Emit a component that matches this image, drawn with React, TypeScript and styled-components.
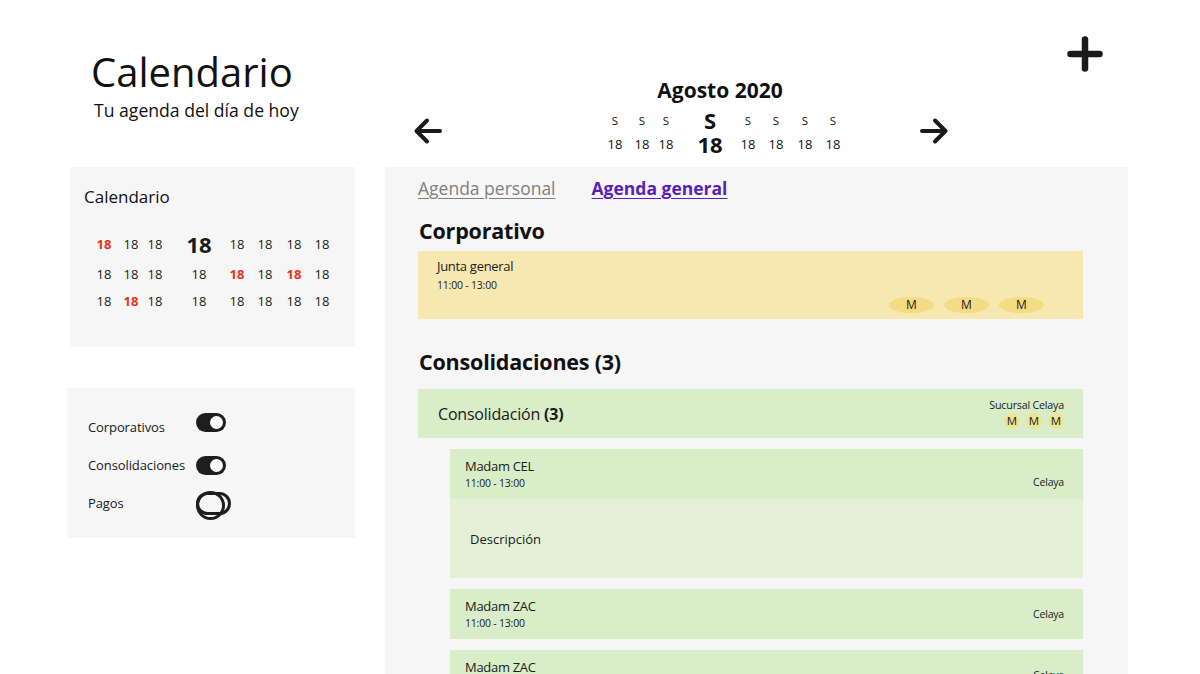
import React from "react";
import styled, { createGlobalStyle } from "styled-components";

const Global = createGlobalStyle`
  html, body { margin: 0; padding: 0; background: #ffffff; overflow: hidden; }
  body { font-family: "Open Sans", "Noto Sans", Arial, sans-serif; color: #1a1a1a; }
  * { box-sizing: border-box; }
`;

const Page = styled.div`
  width: 1200px;
  height: 674px;
  display: flex;
  flex-direction: column;
  overflow: hidden;
`;

const Header = styled.header`
  display: flex;
  height: 167px;
  flex-shrink: 0;
`;

const TitleBlock = styled.div`
  width: 413px;
  padding: 48px 0 0 91px;
`;

const Title = styled.h1`
  margin: 0;
  font-size: 40px;
  line-height: 48px;
  font-weight: 400;
  color: #111;
`;

const Subtitle = styled.p`
  margin: 2px 0 0 3px;
  font-size: 17.6px;
  line-height: 24px;
  color: #111;
`;

const Nav = styled.nav`
  display: flex;
  align-items: flex-end;
  padding-top: 78px;
  height: 156px;
`;

const ArrowButton = styled.button<{ $ml?: number }>`
  border: 0;
  background: none;
  padding: 0;
  width: 30px;
  height: 28px;
  margin-bottom: 11px;
  margin-left: ${(p) => p.$ml ?? 0}px;
  cursor: pointer;
  display: flex;
  align-items: center;
  justify-content: center;
`;

const WeekBlock = styled.div`
  width: 254px;
  margin-left: 154px;
  display: flex;
  flex-direction: column;
  align-items: center;
`;

const Month = styled.div`
  font-size: 21px;
  line-height: 24px;
  font-weight: 700;
  color: #111;
  margin-left: -8px;
`;

const dayColumns = "36px 18px 30px 58px 18px 38px 20px 36px";

const DayGrid = styled.div`
  margin-top: 6px;
  display: grid;
  grid-template-columns: ${dayColumns};
  grid-auto-rows: 24px;
  width: 100%;
`;

const DayCell = styled.span<{ $big?: boolean; $letter?: boolean }>`
  display: flex;
  align-items: center;
  justify-content: center;
  font-size: ${(p) => (p.$big ? "22px" : p.$letter ? "11.5px" : "13px")};
  font-weight: ${(p) => (p.$big ? 700 : 400)};
  color: #111;
`;

const PlusButton = styled.button`
  margin: 36px 97px 0 auto;
  width: 36px;
  height: 36px;
  border: 0;
  padding: 0;
  background: none;
  cursor: pointer;
`;

const Body = styled.div`
  display: flex;
  padding-left: 67px;
  flex: 1;
  min-height: 0;
`;

const Sidebar = styled.aside`
  width: 288px;
  display: flex;
  flex-direction: column;
  gap: 41px;
`;

const CalendarCard = styled.section`
  margin-left: 3px;
  height: 180px;
  background: #f6f6f6;
  padding: 18px 0 0 14px;
`;

const CardLabel = styled.h3`
  margin: 0;
  font-size: 17px;
  line-height: 24px;
  font-weight: 400;
  color: #111;
`;

const MiniGrid = styled.div`
  margin: 20px 0 0 2px;
  display: grid;
  grid-template-columns: ${dayColumns};
  grid-template-rows: 30px 30px 24px;
`;

const MiniDay = styled.span<{ $big?: boolean; $red?: boolean }>`
  display: flex;
  align-items: center;
  justify-content: center;
  font-size: ${(p) => (p.$big ? "22px" : "13px")};
  font-weight: ${(p) => (p.$big ? 700 : p.$red ? 700 : 400)};
  color: ${(p) => (p.$red ? "#e8331c" : "#1a1a1a")};
`;

const FilterCard = styled.section`
  height: 150px;
  background: #f6f6f6;
  padding: 27px 0 0 21px;
  display: flex;
  flex-direction: column;
  gap: 14px;
`;

const FilterRow = styled.label`
  display: flex;
  align-items: center;
  height: 24px;
`;

const FilterName = styled.span`
  width: 108px;
  font-size: 13px;
  color: #1a1a1a;
  letter-spacing: -0.1px;
`;

const Switch = styled.span<{ $on?: boolean; $raised?: boolean }>`
  position: relative;
  display: inline-block;
  width: ${(p) => (p.$on ? "30px" : "35px")};
  height: ${(p) => (p.$on ? "19px" : "23px")};
  margin-top: ${(p) => (p.$raised ? "-10px" : "0")};
  border-radius: 12px;
  background: ${(p) => (p.$on ? "#1e1e1e" : "transparent")};
  border: ${(p) => (p.$on ? "0" : "3.5px solid #1e1e1e")};
  &::after {
    content: "";
    position: absolute;
    border-radius: 50%;
    ${(p) =>
      p.$on
        ? `top: 3px; right: 3px; width: 13px; height: 13px; background: #fff;`
        : `top: -3.5px; left: -3.5px; width: 23px; height: 23px; border: 3.5px solid #1e1e1e; background: transparent;`}
  }
`;

const Main = styled.main`
  margin-left: 30px;
  width: 743px;
  background: #f6f6f6;
  padding: 10px 45px 0 33px;
  overflow: hidden;
`;

const Tabs = styled.div`
  display: flex;
  gap: 36px;
`;

const Tab = styled.a<{ $active?: boolean }>`
  font-size: 17.5px;
  line-height: 22px;
  font-weight: ${(p) => (p.$active ? 700 : 400)};
  color: ${(p) => (p.$active ? "#5a1fb8" : "#808080")};
  text-decoration: underline;
  text-underline-offset: 3px;
  cursor: pointer;
`;

const SectionTitle = styled.h2<{ $mt: number; $mb: number }>`
  margin: ${(p) => p.$mt}px 0 ${(p) => p.$mb}px 1px;
  font-size: 21.5px;
  line-height: 28px;
  font-weight: 700;
  color: #111;
  letter-spacing: -0.2px;
`;

const EventCard = styled.div`
  height: 68px;
  background: #f7e8b1;
  padding: 6px 39px 6px 19px;
  display: flex;
  flex-direction: column;
`;

const EventName = styled.div`
  font-size: 13px;
  line-height: 18px;
  color: #1a1a1a;
  letter-spacing: -0.3px;
`;

const EventTime = styled.div<{ $gap?: number }>`
  font-size: 10.5px;
  line-height: 16px;
  margin-top: ${(p) => p.$gap ?? 0}px;
  color: #1a1a1a;
  letter-spacing: -0.2px;
`;

const Pills = styled.div`
  margin-top: auto;
  align-self: flex-end;
  display: flex;
  gap: 10px;
`;

const Pill = styled.span`
  width: 45px;
  height: 16px;
  border-radius: 50%;
  background: #f4dc84;
  font-size: 12px;
  line-height: 16px;
  text-align: center;
  color: #1a1a1a;
`;

const GroupCard = styled.div`
  height: 49px;
  background: #d9edc8;
  padding: 0 19px 0 20px;
  display: flex;
  align-items: center;
  justify-content: space-between;
`;

const GroupName = styled.div`
  font-size: 16px;
  color: #1a1a1a;
  letter-spacing: -0.2px;
  b { font-weight: 700; }
`;

const GroupMeta = styled.div`
  display: flex;
  flex-direction: column;
  align-items: flex-end;
  gap: 1px;
`;

const Branch = styled.span`
  font-size: 10.7px;
  line-height: 14px;
  color: #1a1a1a;
  letter-spacing: -0.2px;
`;

const Avatars = styled.div`
  display: flex;
  gap: 6px;
`;

const Avatar = styled.span`
  width: 16px;
  height: 16px;
  border-radius: 50%;
  background: #eee594;
  font-size: 11.5px;
  line-height: 16px;
  text-align: center;
  color: #1a1a1a;
`;

const SubList = styled.div`
  margin-left: 32px;
  margin-top: 11px;
  display: flex;
  flex-direction: column;
  gap: 11px;
`;

const SubCard = styled.div``;

const SubHeader = styled.div`
  height: 50px;
  background: #d9edc8;
  padding: 8px 19px 0 15px;
  display: flex;
  align-items: flex-start;
  justify-content: space-between;
`;

const SubPlace = styled.span<{ $mid?: boolean }>`
  font-size: 10.5px;
  line-height: 16px;
  color: #1a1a1a;
  margin-top: ${(p) => (p.$mid ? "9px" : "17px")};
  letter-spacing: -0.2px;
`;

const SubBody = styled.div`
  height: 79px;
  background: #e3f0d6;
  padding: 0 20px;
  display: flex;
  align-items: center;
  font-size: 13px;
  color: #1a1a1a;
`;

const ArrowIcon = ({ dir }: { dir: "left" | "right" }) => (
  <svg width="30" height="28" viewBox="0 0 30 28" fill="none" stroke="#1a1a1a" strokeWidth="4" strokeLinecap="round" strokeLinejoin="round">
    {dir === "left" ? (
      <path d="M27 14 H4 M14 3.5 L3.5 14 L14 24.5" />
    ) : (
      <path d="M3 14 H26 M16 3.5 L26.5 14 L16 24.5" />
    )}
  </svg>
);

const PlusIcon = () => (
  <svg width="36" height="36" viewBox="0 0 36 36" fill="none" stroke="#1a1a1a" strokeWidth="6.5" strokeLinecap="round">
    <path d="M18 3.5 V32.5 M3.5 18 H32.5" />
  </svg>
);

const miniRows: { red?: boolean; big?: boolean }[][] = [
  [{ red: true }, {}, {}, { big: true }, {}, {}, {}, {}],
  [{}, {}, {}, {}, { red: true }, {}, { red: true }, {}],
  [{}, { red: true }, {}, {}, {}, {}, {}, {}],
];

const subEvents = [
  { name: "Madam CEL", desc: true },
  { name: "Madam ZAC" },
  { name: "Madam ZAC" },
];

export default function App() {
  return (
    <Page>
      <Global />
      <Header>
        <TitleBlock>
          <Title>Calendario</Title>
          <Subtitle>Tu agenda del día de hoy</Subtitle>
        </TitleBlock>
        <Nav>
          <ArrowButton aria-label="Anterior">
            <ArrowIcon dir="left" />
          </ArrowButton>
          <WeekBlock>
            <Month>Agosto 2020</Month>
            <DayGrid>
              {Array.from({ length: 8 }).map((_, i) => (
                <DayCell key={"l" + i} $big={i === 3} $letter>
                  S
                </DayCell>
              ))}
              {Array.from({ length: 8 }).map((_, i) => (
                <DayCell key={"n" + i} $big={i === 3}>
                  18
                </DayCell>
              ))}
            </DayGrid>
          </WeekBlock>
          <ArrowButton aria-label="Siguiente" $ml={68}>
            <ArrowIcon dir="right" />
          </ArrowButton>
        </Nav>
        <PlusButton aria-label="Agregar">
          <PlusIcon />
        </PlusButton>
      </Header>
      <Body>
        <Sidebar>
          <CalendarCard>
            <CardLabel>Calendario</CardLabel>
            <MiniGrid>
              {miniRows.flatMap((row, r) =>
                row.map((d, c) => (
                  <MiniDay key={r + "-" + c} $red={d.red} $big={d.big}>
                    18
                  </MiniDay>
                ))
              )}
            </MiniGrid>
          </CalendarCard>
          <FilterCard>
            <FilterRow>
              <FilterName>Corporativos</FilterName>
              <Switch $on $raised />
            </FilterRow>
            <FilterRow>
              <FilterName>Consolidaciones</FilterName>
              <Switch $on />
            </FilterRow>
            <FilterRow>
              <FilterName>Pagos</FilterName>
              <Switch />
            </FilterRow>
          </FilterCard>
        </Sidebar>
        <Main>
          <Tabs>
            <Tab>Agenda personal</Tab>
            <Tab $active>Agenda general</Tab>
          </Tabs>
          <SectionTitle $mt={18} $mb={6}>Corporativo</SectionTitle>
          <EventCard>
            <EventName>Junta general</EventName>
            <EventTime $gap={2}>11:00 - 13:00</EventTime>
            <Pills>
              <Pill>M</Pill>
              <Pill>M</Pill>
              <Pill>M</Pill>
            </Pills>
          </EventCard>
          <SectionTitle $mt={29} $mb={13}>Consolidaciones (3)</SectionTitle>
          <GroupCard>
            <GroupName>
              Consolidación <b>(3)</b>
            </GroupName>
            <GroupMeta>
              <Branch>Sucursal Celaya</Branch>
              <Avatars>
                <Avatar>M</Avatar>
                <Avatar>M</Avatar>
                <Avatar>M</Avatar>
              </Avatars>
            </GroupMeta>
          </GroupCard>
          <SubList>
            {subEvents.map((ev, i) => (
              <SubCard key={i}>
                <SubHeader>
                  <div>
                    <EventName>{ev.name}</EventName>
                    <EventTime>11:00 - 13:00</EventTime>
                  </div>
                  <SubPlace $mid={!ev.desc}>Celaya</SubPlace>
                </SubHeader>
                {ev.desc && <SubBody>Descripción</SubBody>}
              </SubCard>
            ))}
          </SubList>
        </Main>
      </Body>
    </Page>
  );
}
